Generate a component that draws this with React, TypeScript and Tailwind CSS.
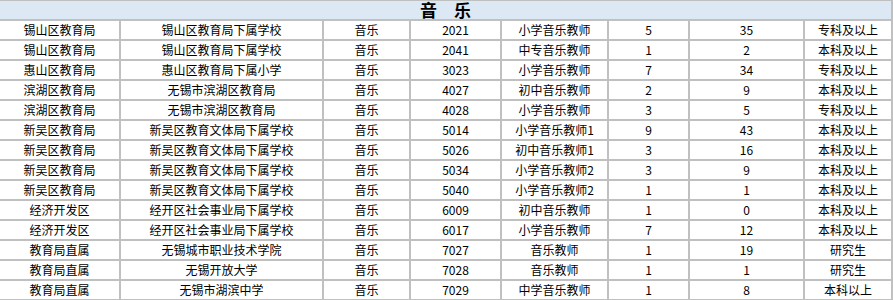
const rows = [
  ['锡山区教育局', '锡山区教育局下属学校', '音乐', '2021', '小学音乐教师', '5', '35', '专科及以上'],
  ['锡山区教育局', '锡山区教育局下属学校', '音乐', '2041', '中专音乐教师', '1', '2', '本科及以上'],
  ['惠山区教育局', '惠山区教育局下属小学', '音乐', '3023', '小学音乐教师', '7', '34', '专科及以上'],
  ['滨湖区教育局', '无锡市滨湖区教育局', '音乐', '4027', '初中音乐教师', '2', '9', '本科及以上'],
  ['滨湖区教育局', '无锡市滨湖区教育局', '音乐', '4028', '小学音乐教师', '3', '5', '专科及以上'],
  ['新吴区教育局', '新吴区教育文体局下属学校', '音乐', '5014', '小学音乐教师1', '9', '43', '本科及以上'],
  ['新吴区教育局', '新吴区教育文体局下属学校', '音乐', '5026', '初中音乐教师1', '3', '16', '本科及以上'],
  ['新吴区教育局', '新吴区教育文体局下属学校', '音乐', '5034', '小学音乐教师2', '3', '9', '本科及以上'],
  ['新吴区教育局', '新吴区教育文体局下属学校', '音乐', '5040', '小学音乐教师2', '1', '1', '本科及以上'],
  ['经济开发区', '经开区社会事业局下属学校', '音乐', '6009', '初中音乐教师', '1', '0', '本科及以上'],
  ['经济开发区', '经开区社会事业局下属学校', '音乐', '6017', '小学音乐教师', '7', '12', '本科及以上'],
  ['教育局直属', '无锡城市职业技术学院', '音乐', '7027', '音乐教师', '1', '19', '研究生'],
  ['教育局直属', '无锡开放大学', '音乐', '7028', '音乐教师', '1', '1', '研究生'],
  ['教育局直属', '无锡市湖滨中学', '音乐', '7029', '中学音乐教师', '1', '8', '本科以上'],
]

export default function App() {
  return (
    <div className="w-[893px] h-[300px] overflow-hidden bg-white font-['Noto_Sans_CJK_SC',sans-serif] text-black">
      <div className="grid grid-cols-[119px_201px_85px_89px_105px_79px_113px_86px] gap-[2px] bg-[#c0c0c0] pt-px pr-[2px] pb-[2px]">
        <div className="col-span-8 h-[18px] bg-[#dce8f4] flex items-center justify-center text-[17px] font-bold leading-[18px]">
          音　乐
        </div>
        {rows.map((row, i) =>
          row.map((cell, j) => (
            <div
              key={`${i}-${j}`}
              className="h-[18px] bg-white flex items-center justify-center text-[12px] leading-[18px] whitespace-nowrap"
            >
              {cell}
            </div>
          ))
        )}
      </div>
    </div>
  )
}
